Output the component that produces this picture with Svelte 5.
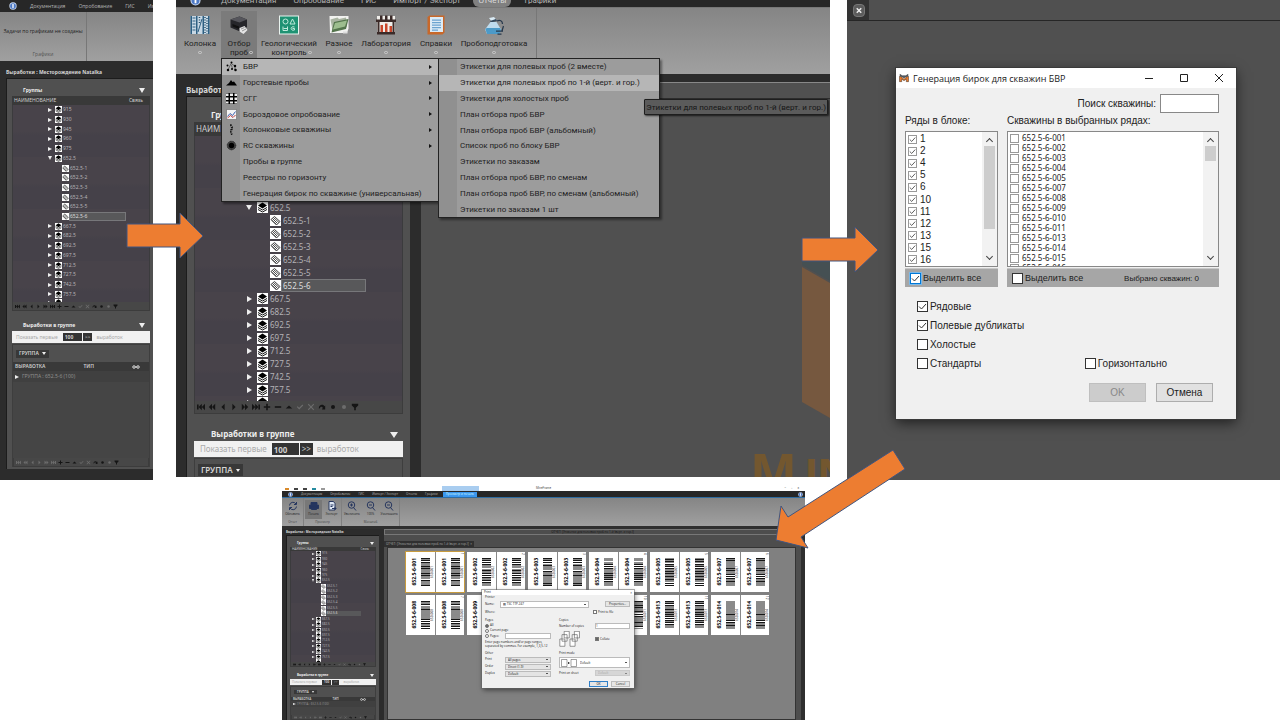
<script>
  const levels = ['915', '930', '945', '960', '975', '652.5', '652.5-1', '652.5-2', '652.5-3', '652.5-4', '652.5-5', '652.5-6', '667.5', '682.5', '692.5', '697.5', '712.5', '727.5', '742.5', '757.5'];
  const navGlyphs = ['first', 'rew', 'prev', 'next', 'fwd', 'last', 'plus', 'minus', 'up', 'ok', 'no', 'redo', 'dot', 'dot2', 'filter'];

  const tools = [
    { icon: 'column', label: 'Колонка' },
    { icon: 'printer', label: 'Отбор проб', active: true },
    { icon: 'geo', label: 'Геологический контроль' },
    { icon: 'folder', label: 'Разное' },
    { icon: 'lab', label: 'Лаборатория' },
    { icon: 'book', label: 'Справки' },
    { icon: 'flask', label: 'Пробоподготовка' }
  ];

  const menu = [
    { icon: 'nodes', label: 'БВР', sub: true, on: true },
    { icon: 'heap', label: 'Горстевые пробы', sub: true },
    { icon: 'grid', label: 'СГГ', sub: true },
    { icon: 'chart', label: 'Бороздовое опробование', sub: true },
    { icon: 'core', label: 'Колонковые скважины', sub: true },
    { icon: 'rc', label: 'RC скважины', sub: true },
    { label: 'Пробы в группе' },
    { label: 'Реестры по горизонту' },
    { label: 'Генерация бирок по скважине (универсальная)' }
  ];

  const submenu = [
    'Этикетки для полевых проб (2 вместе)',
    'Этикетки для полевых проб по 1-й (верт. и гор.)',
    'Этикетки для холостых проб',
    'План отбора проб БВР',
    'План отбора проб БВР (альбомный)',
    'Список проб по блоку БВР',
    'Этикетки по заказам',
    'План отбора проб БВР, по сменам',
    'План отбора проб БВР, по сменам (альбомный)',
    'Этикетки по заказам 1 шт'
  ];

  const rowNumbers = [1, 2, 4, 5, 6, 10, 11, 12, 13, 15, 16];
  const holes = ['001', '002', '003', '004', '005', '007', '008', '009', '010', '011', '013', '014', '015', '016'];
  const kinds = [['Рядовые', true], ['Полевые дубликаты', true], ['Холостые', false], ['Стандарты', false]];
  const cards = ['001', '002', '003', '004', '005', '007', '008', '009', '010', '011', '013', '014'];

  function bars(code) {
    const out = [];
    let seed = Number(code) * 7919 + 13;
    let y = 0;
    while (y < 56) {
      seed = (seed * 1103515245 + 12345) % 2147483648;
      const h = 1 + (seed >> 9) % 3;
      out.push([y, Math.min(h, 56 - y)]);
      y += h + 1 + (seed >> 14) % 2;
    }
    return out;
  }
</script>

{#snippet globe()}
  <svg class="globe" viewBox="0 0 12 12" aria-hidden="true">
    <circle cx="6" cy="6" r="5.5" fill="#c9d8f0" />
    <circle cx="6" cy="6" r="4.3" fill="#4c78c4" />
    <path d="M5 3h2v6H5z" fill="#fff" />
  </svg>
{/snippet}

{#snippet navBar(dim)}
  <div class="nav" class:dim>
    {#each navGlyphs as g}
      <svg viewBox="0 0 10 10" class={g} aria-hidden="true">
        {#if g === 'first'}<path d="M0 2h2v6H0zM6 1v8L2 5zM10 1v8L6 5z" />
        {:else if g === 'rew'}<path d="M5 1v8L1 5zM9 1v8L5 5z" />
        {:else if g === 'prev'}<path d="M7 1v8L3 5z" />
        {:else if g === 'next'}<path d="M3 1v8l4-4z" />
        {:else if g === 'fwd'}<path d="M1 1v8l4-4zM5 1v8l4-4z" />
        {:else if g === 'last'}<path d="M8 2h2v6H8zM0 1v8l4-4zM4 1v8l4-4z" />
        {:else if g === 'plus'}<path d="M4 1h2v3h3v2H6v3H4V6H1V4h3z" />
        {:else if g === 'minus'}<path d="M1 4h8v2H1z" />
        {:else if g === 'up'}<path d="M1 7l4-4 4 4z" />
        {:else if g === 'ok'}<path d="M1 5l1-1 2 2 4-4 1 1-5 5z" />
        {:else if g === 'no'}<path d="M2 1l3 3 3-3 1 1-3 3 3 3-1 1-3-3-3 3-1-1 3-3-3-3z" />
        {:else if g === 'redo'}<path d="M1 7c0-5 5-6 7-3l1-1v5H5l1-2C5 4 3 4 2 7z" />
        {:else if g === 'filter'}<path d="M1 1h8v2L6 6v3H4V6L1 3z" />
        {:else}<circle cx="5" cy="5" r="2.500" />{/if}
      </svg>
    {/each}
  </div>
{/snippet}

{#snippet layers()}
  <svg class="leaf" viewBox="0 0 22 22" aria-hidden="true">
    <path fill="#fff" d="M0 0h22v22H0z" />
    <path d="M11 1l9 6-9 6-9-6z" />
    <path d="M2 11l9 5 9-5M2 15l9 5 9-5" fill="none" stroke="#111" stroke-width="2" />
  </svg>
{/snippet}

{#snippet sidebar(size)}
  <section class="side {size}">
    <h2 class="side-title"><span>Выработки : Месторождение Natalka</span></h2>
    <div class="frame">
      <div class="cap"><b>Группы</b><i class="fold"></i></div>
      <div class="head"><span>НАИМЕНОВАНИЕ</span>{#if size !== 'lg'}<span>Связь</span>{/if}</div>
      <div class="tree">
        <ul>
          {#each levels.slice(size === 'lg' ? 5 : 0) as name}
            {@const child = name.includes('-')}
            <li class:child>
              {#if child}
                <svg class="leaf" viewBox="0 0 22 22" aria-hidden="true">
                  <path fill="#fff" d="M0 0h22v22H0z" />
                  <path stroke="#444" stroke-width="2" fill="none" d="M2 9l7-6 11 10-7 7zM5 7l10 10M7 5l11 10M3 10l10 9" />
                </svg>
              {:else}
                <i class="tri" class:open={name === '652.5'}></i>{@render layers()}
              {/if}
              <span class:picked={name === '652.5-6'}>{name}</span>
            </li>
          {/each}
        </ul>
        <div class="peek"><i class="tri"></i>{@render layers()}</div>
      </div>
      {@render navBar(false)}
      <div class="cap second"><b>Выработки в группе</b><i class="fold"></i></div>
      <div class="show">
        <label for="count-{size}">Показать первые</label>
        <input id="count-{size}" type="text" value="100" />
        <button type="button">&gt;&gt;</button>
        <span>выработок</span>
      </div>
      <div class="group">
        <div class="group-by"><button type="button">ГРУППА<i class="fold"></i></button></div>
        {#if size !== 'lg'}
          <div class="head"><span>ВЫРАБОТКА</span><span>ТИП</span><svg class="oo" viewBox="0 0 16 8" aria-hidden="true"><path d="M6 4h4" stroke="#ddd" stroke-width="2" /><circle cx="4" cy="4" r="2.500" /><circle cx="12" cy="4" r="2.500" /></svg></div>
          <div class="group-row"><i class="tri"></i><span>ГРУППА : 652.5-6 (100)</span></div>
          <div class="rest"></div>
          {@render navBar(true)}
        {/if}
      </div>
    </div>
  </section>
{/snippet}

{#snippet toolIcon(name)}
  <svg class="tool-icon" viewBox="0 0 40 40" aria-hidden="true">
    {#if name === 'column'}
      <path fill="#c8d8e4" d="M1 2h38v36H1z" />
      <path fill="#2d5f82" d="M1 2h3v36H1zM12 2h3v36h-3zM25 2h3v36h-3zM36 2h3v36h-3z" />
      <path stroke="#2d5f82" stroke-width="2" d="M5 6h6M5 12h6M5 18h6M5 24h6M5 30h6M16 34l8-26" />
      <path stroke="#28536f" stroke-width="3" stroke-dasharray="2 3" d="M30 4v33M34 6v31M19 4v15" />
    {:else if name === 'printer'}
      <path fill="#26262a" d="M3 9l18-6 15 6v15l-14 9L3 25z" />
      <path fill="#55555b" d="M3 9l18-6 15 6-15 6z" />
      <path fill="#111" d="M7 18l13 5v5L7 23z" />
      <path fill="#e6e6e6" d="M21 26l10-4 6 8-8 8-8-5z" />
      <path stroke="#777" stroke-width="1.500" d="M24 28l7-3M26 32l8-4" />
    {:else if name === 'geo'}
      <path fill="#e9f3ef" d="M0 1h40v38H0z" />
      <path fill="#1f9273" d="M2 3h36v34H2z" />
      <g fill="none" stroke="#c2eadc" stroke-width="2"><circle cx="13" cy="13" r="5" /><path d="M22 18l5-10 5 10zM8 23v8h9v-8M9 27h7M31 24c-9-3-9 9 0 6v-3h-4" /></g>
    {:else if name === 'folder'}
      <path fill="#f2f2f0" d="M1 2h38v25l-3 9H2z" />
      <path fill="#aab4a2" d="M3 9l14-4 3 3 14-3 2 18-29 8z" />
      <path fill="#54744c" d="M10 14l29-6-5 20-29 7z" />
      <path fill="#9dbd8e" d="M12 16l24-5-4 12-24 6z" />
      <path fill="#ddd" d="M28 33h9v4h-9z" />
    {:else if name === 'lab'}
      <path fill="#f0eeea" d="M2 2h36v36H2z" />
      <path fill="#3b2b29" d="M0 9h40v5H0zM2 34h36v5H2zM3 14h4v20H3zM33 14h4v20h-4zM8 1h5v8H8zM18 1h5v8h-5zM28 1h5v8h-5z" />
      <path fill="#c8462b" d="M9 20h5v14H9zM18 17h5v17h-5zM27 22h5v12h-5z" />
    {:else if name === 'book'}
      <path fill="#c8682a" d="M3 4l4-3h30v34l-4 4H3z" />
      <path fill="#dcebf6" d="M8 4h26v30H8z" />
      <path stroke="#6aa3cf" stroke-width="2.500" d="M12 10h18M12 15h18M12 20h18M12 25h18M12 30h12" />
    {:else}
      <path fill="#d9eaf4" d="M10 6l10-2 5 6-9 4z" />
      <path fill="#34485c" d="M12 12l12-4 2 4-12 3z" />
      <path fill="#bfdcee" d="M13 14h12l9 15-3 9H6l-4-9z" />
      <path fill="#4c9ac8" d="M5 26h27l2 4-3 8H6l-3-9z" />
      <path fill="none" stroke="#26384c" stroke-width="2.500" d="M26 12c6-3 11 0 11 6M39 22l-3 10M24 32h14M27 38h8" />
    {/if}
  </svg>
{/snippet}

{#snippet menuIcon(name)}
  <svg class="menu-icon" viewBox="0 0 22 22" aria-hidden="true">
    {#if name === 'nodes'}
      <circle cx="11" cy="3" r="2" /><circle cx="3" cy="9" r="2" /><circle cx="4" cy="18" r="2.500" /><circle cx="12" cy="16" r="2" /><circle cx="18" cy="10" r="2.500" /><circle cx="19" cy="18" r="2.500" />
      <path d="M4 18L10 5l8 5M13 16l-2-8M18 10v8" stroke="#111" fill="none" />
    {:else if name === 'heap'}<path d="M0 17l6-5 4-6 3 4 3-1 6 8z" />
    {:else if name === 'grid'}
      <path d="M0 0h22v22H0z" />
      <path fill="#eee" d="M0 1h5v5H0zM8 1h6v5H8zM17 1h5v5h-5zM0 9h5v5H0zM8 9h6v5H8zM17 9h5v5h-5zM0 17h5v4H0zM8 17h6v4H8zM17 17h5v4h-5z" />
    {:else if name === 'chart'}
      <path fill="#f4f4f4" stroke="#555" d="M1 1h20v20H1z" />
      <path d="M3 15l5-6 5 4 6-8" stroke="#3a5fae" stroke-width="2" fill="none" /><path d="M3 18l6-5 5 4 5-5" stroke="#bd4040" stroke-width="2" fill="none" />
    {:else if name === 'core'}<path d="M11 1c-3 3 3 4 0 7s3 4 0 6 3 4-1 7" stroke="#111" stroke-width="4" stroke-dasharray="3 2" fill="none" />
    {:else if name === 'rc'}<circle cx="11" cy="11" r="8.500" fill="#444" stroke="#222" stroke-width="2" stroke-dasharray="2 1" /><circle cx="11" cy="11" r="5.500" />{/if}
  </svg>
{/snippet}

<main class="slide">
  <div class="top">
    <section class="shot first-shot">
      <nav class="tabs small">{@render globe()}<a href="#doc">Документация</a><a href="#opr">Опробование</a><a href="#gis">ГИС</a><a href="#imp">Импорт</a></nav>
      <div class="ribbon mini">
        <div class="task"><span>Задачи по графикам не созданы</span><small>Графики</small></div>
      </div>
      {@render sidebar('md')}
    </section>

    <section class="shot second-shot">
      <nav class="tabs cut">{@render globe()}<a href="#doc2">Документация</a><a href="#opr2">Опробование</a><a href="#gis2">ГИС</a><a href="#imp2">Импорт / Экспорт</a><a class="current" href="#rep2">Отчеты</a><a href="#gr2">Графики</a></nav>
      <div class="ribbon">
        <div class="tools">
          {#each tools as t}
            <button type="button" class:active={t.active}>{@render toolIcon(t.icon)}<span>{t.label}</span><i class="drop"></i></button>
          {/each}
        </div>
      </div>
      <div class="work">
        {@render sidebar('lg')}
        <div class="canvas">
          <div class="canvas-tab"></div>
          <svg class="brand" viewBox="0 0 80 225" role="img" aria-label="MINE">
            <path fill="#455053" d="M52 0h28v29L52 13z" />
            <path fill="#76583f" d="M52 15l28 16v135l-28-16z" />
            <g fill="#73572f" font-family="Liberation Sans" font-weight="700"><text x="1" y="239" font-size="54">M</text><text x="55" y="239" font-size="46">INE</text></g>
          </svg>
        </div>
      </div>
      <div class="menu main-menu" role="menu">
        {#each menu as m}
          <button type="button" role="menuitem" class:on={m.on}>
            <span class="slot">{#if m.icon}{@render menuIcon(m.icon)}{/if}</span><span class="text">{m.label}</span>{#if m.sub}<i class="more"></i>{/if}
          </button>
        {/each}
      </div>
      <div class="menu sub-menu" role="menu">
        {#each submenu as m, i}
          <button type="button" role="menuitem" class:on={i === 1}><span class="slot"></span><span class="text">{m}</span></button>
        {/each}
      </div>
      <div class="tip" role="tooltip">Этикетки для полевых проб по 1-й (верт. и гор.)</div>
    </section>

    <section class="shot third-shot">
      <div class="tab-strip"><button type="button" aria-label="Закрыть"><svg viewBox="0 0 8 8"><path d="M1 1l6 6M7 1L1 7" stroke="#eee" stroke-width="2" /></svg></button></div>
      <div class="dialog" role="dialog" aria-label="Генерация бирок для скважин БВР">
        <header>
          <svg class="logo" viewBox="0 0 22 18" aria-hidden="true"><path fill="#ea7a2a" d="M1 17V5l5 2 5 5 5-5 5-2v12h-5v-6l-5 4-5-4v6z" /><path fill="#55606a" d="M2 1l5 3h8l5-3-1 4-4 1-4 3-4-3-4-1z" /></svg>
          <h1>Генерация бирок для скважин БВР</h1>
          <button type="button" aria-label="Свернуть"><svg viewBox="0 0 10 10"><path d="M1 5.500h8" /></svg></button>
          <button type="button" aria-label="Развернуть"><svg viewBox="0 0 10 10"><path d="M1.500 1.500h7v7h-7z" /></svg></button>
          <button type="button" aria-label="Закрыть окно"><svg viewBox="0 0 10 10"><path d="M1 1l8 8M9 1L1 9" /></svg></button>
        </header>
        <div class="body">
          <div class="search"><label for="find">Поиск скважины:</label><input id="find" type="text" /></div>
          <div class="lists">
            <div class="pick rows-pick">
              <h3>Ряды в блоке:</h3>
              <div class="box">
                <div class="items">{#each rowNumbers as n}<label><input type="checkbox" checked />{n}</label>{/each}</div>
                <div class="bar"><i class="chev up"></i><span class="thumb"></span><i class="chev"></i></div>
              </div>
              <div class="all"><label><input class="focus" type="checkbox" checked />Выделить все</label></div>
            </div>
            <div class="pick holes-pick">
              <h3>Скважины в выбранных рядах:</h3>
              <div class="box">
                <div class="items">{#each holes as h}<label><input type="checkbox" />652.5-6-{h}</label>{/each}</div>
                <div class="bar"><i class="chev up"></i><span class="thumb short"></span><i class="chev"></i></div>
              </div>
              <div class="all"><label><input type="checkbox" />Выделить все</label><span>Выбрано скважин: 0</span></div>
            </div>
          </div>
          <div class="options">
            <div class="kinds">{#each kinds as [k, on]}<label><input type="checkbox" checked={on} />{k}</label>{/each}</div>
            <label class="horizontal"><input type="checkbox" />Горизонтально</label>
          </div>
          <footer><button type="button" disabled>OK</button><button type="button">Отмена</button></footer>
        </div>
      </div>
    </section>
  </div>

  <div class="bottom">
    <section class="shot fourth-shot">
      <div class="win-title"><i class="q1"></i><i class="q2"></i><i class="q3"></i><i class="q4"></i><i class="q5"></i><span class="ctx"></span><span class="caption">MineFrame</span><span class="ctl">–</span><span>▫</span><span>×</span></div>
      <nav class="tabs tiny">{@render globe()}<a href="#d4">Документация</a><a href="#o4">Опробование</a><a href="#g4">ГИС</a><a href="#i4">Импорт / Экспорт</a><a href="#r4">Отчеты</a><a href="#gr4">Графики</a><a class="current" href="#p4">Просмотр и печать</a><span class="grow"></span>{@render globe()}</nav>
      <div class="ribbon low">
        <div class="set"><div class="btns"><button type="button"><svg viewBox="0 0 20 20"><path d="M3 9a7 7 0 0 1 13-3M17 11a7 7 0 0 1-13 3" /><path d="M17 2v5h-5M3 18v-5h5" /></svg>Обновить</button></div><small>Отчет</small></div>
        <div class="set"><div class="btns"><button type="button" class="active"><svg viewBox="0 0 20 20"><path fill="#24345e" d="M4 3h12v4H4zM1 8h18v7H1zM5 14h10v3H5z" /></svg>Печать</button><button type="button"><svg viewBox="0 0 20 20"><path fill="#dfe8f4" d="M4 1h9l3 4v13H4z" /><path d="M7 8h6M7 11h4M10 15h8M15 12l3 3-3 3" /></svg>Экспорт</button></div><small>Просмотр</small></div>
        <div class="set"><div class="btns">{#each ['Увеличить', '100%', 'Уменьшить'] as z, i}<button type="button"><svg viewBox="0 0 20 20"><circle cx="9" cy="8" r="6.500" /><path d="M13 13l5 6M6 8h6" />{#if i === 0}<path d="M9 5v6" />{/if}</svg>{z}</button>{/each}</div><small>Масштаб</small></div>
      </div>
      <div class="work">
        {@render sidebar('xs')}
        <div class="report">
          <div class="report-title">ОТЧЕТ: [Этикетки для полевых проб по 1-й (верт. и гор.)]</div>
          <div class="report-tabs"><span>ОТЧЕТ: [Этикетки для полевых проб по 1-й (верт. и гор.)]&nbsp; ×</span></div>
          <div class="sheet">
            {#each cards as c, i}
              <div class="card" class:chosen={i === 0}>
                {#each [0, 1] as half}
                  <div class="half">
                    <b>652.5-6-{c}</b>
                    <svg viewBox="0 0 20 56" preserveAspectRatio="none" aria-hidden="true">{#each bars(c) as [y, h]}<rect x="0" {y} width="20" height={h} fill="#161616" />{/each}</svg>
                    <span class="code">6526{c}</span>
                    {#if half}<span class="num">{i + 1}</span>{/if}
                  </div>
                {/each}
              </div>
            {/each}
          </div>
        </div>
      </div>

      <form class="print" aria-label="Print">
        <div class="print-head"><span>Print</span><button type="button" aria-label="Close">×</button></div>
        <div class="print-body">
          <fieldset class="printer">
            <legend>Printer</legend>
            <label for="pr-name">Name:</label><select id="pr-name"><option>▤ TSC TTP-247</option></select><button type="button">Properties...</button>
            <span>Where:</span><span></span><label><input type="checkbox" />Print to file</label>
          </fieldset>
          <div class="cols">
            <fieldset class="pages">
              <legend>Pages</legend>
              <label><input type="radio" name="pg" checked />All</label>
              <label><input type="radio" name="pg" />Current page</label>
              <div class="range"><label><input type="radio" name="pg" />Pages:</label><input type="text" aria-label="Page range" /></div>
              <p>Enter page numbers and/or page ranges,<br />separated by commas. For example, 1,3,5-12</p>
            </fieldset>
            <fieldset class="copies">
              <legend>Copies</legend>
              <div class="number"><label for="pr-num">Number of copies</label><input id="pr-num" type="text" value="1" /></div>
              <div class="collate">
                <svg viewBox="0 0 60 44" aria-hidden="true"><path fill="#fff" stroke="#444" stroke-width="1.500" d="M14 1h14v18H14zM8 10h14v18H8zM2 22h14v20H2zM42 1h14v18H42zM36 10h14v18H36zM30 22h14v20H30z" /></svg>
                <label><input type="checkbox" checked />Collate</label>
              </div>
            </fieldset>
            <fieldset class="other">
              <legend>Other</legend>
              <label for="pr-p">Print</label><select id="pr-p"><option>All pages</option></select>
              <label for="pr-o">Order</label><select id="pr-o"><option>Direct (1-9)</option></select>
              <label for="pr-d">Duplex</label><select id="pr-d"><option>Default</option></select>
            </fieldset>
            <fieldset class="mode">
              <legend>Print mode</legend>
              <div class="mode-pick">
                <svg viewBox="0 0 34 16" aria-hidden="true"><path fill="#fff" stroke="#444" d="M1 1h11v14H1zM20 1h11v14H20z" /><path d="M14 6l4 2-4 2z" /></svg>
                <select aria-label="Print mode"><option>Default</option></select>
              </div>
              <label for="pr-s">Print on sheet</label><select id="pr-s" disabled><option>Default</option></select>
            </fieldset>
          </div>
          <footer><button type="button" class="ok">OK</button><button type="button">Cancel</button></footer>
        </div>
      </form>
    </section>
  </div>

  <svg class="arrows" viewBox="0 0 1280 720" aria-hidden="true">
    <g fill="#ed7d31" stroke="#41557f" stroke-width="1">
      <path d="M127 224h53v-11l23 23-23 22v-11h-53z" />
      <path d="M802 238h53v-11l23 23-23 22v-11h-53z" />
      <path d="M893 450l12 19-104 68 7 11-32-8 5-34 7 11z" />
    </g>
  </svg>
</main>

<style>
  :global(body) { margin: 0; background: #fff; }
  .slide, .slide * { box-sizing: border-box; }
  .slide { position: relative; overflow: hidden; font-family: Roboto, "Noto Sans", sans-serif; font-size: 8px; line-height: 1; color: #222; }
  .slide :is(button, input, select) { font: inherit; color: inherit; margin: 0; padding: 0; border: 0; border-radius: 0; background: none; }
  .slide :is(h1, h2, h3, ul, p, fieldset) { margin: 0; padding: 0; border: 0; list-style: none; font: inherit; min-width: 0; }
  .slide i { font-style: normal; }
  .slide svg { display: block; flex: none; }
  .top { display: grid; grid-template-columns: minmax(0, 153fr) minmax(0, 23fr) minmax(0, 654fr) minmax(0, 17fr) minmax(0, 433fr); align-items: start; }
  .second-shot { grid-column: 3; }
  .third-shot { grid-column: 5; }
  .bottom { display: grid; grid-template-columns: minmax(0, 282fr) minmax(0, 523fr) minmax(0, 475fr); padding-top: 6px; }
  .shot { position: relative; overflow: hidden; display: flex; flex-direction: column; white-space: nowrap; background: #2c2c2c; }
  .first-shot, .third-shot { height: 480px; }
  .second-shot { height: 477px; }
  .fourth-shot { grid-column: 2; height: 234px; background: #2f2f2f; }
  .arrows { position: absolute; inset: 0; width: 100%; pointer-events: none; }

  .tabs { display: flex; align-items: center; background: #272727; flex: none; }
  .tabs a { color: #b4b4b4; text-decoration: none; }
  .tabs.small { height: 12px; padding-left: 9px; gap: 13px; font-size: 5px; font-family: "Open Sans", sans-serif; }
  .globe { width: 8px; height: 8px; }
  .tabs.cut { height: 8px; padding: 0 0 6px 14px; gap: 17px; font-size: 8px; border-bottom: 1px solid #777; }
  .cut .globe { width: 11px; height: 11px; margin-right: 3px; }
  .cut .current { background: #808080; color: #ddd; border-radius: 6px; padding: 2px 5px; margin: 0 -4px; }
  .tabs.tiny { height: 7px; padding: 0 2px 0 6px; gap: 8px; font-size: 3px; font-family: "Open Sans", sans-serif; border-bottom: 1px solid #2f6ca0; }
  .tiny .globe { width: 5px; height: 5px; }
  .tiny .current { background: #3b97ef; color: #dff; padding: 1px 3px; margin-left: -3px; }
  .grow { flex: 1; }

  .ribbon { flex: none; height: 66px; background: linear-gradient(#858585, #a0a0a0); display: flex; }
  .ribbon.mini { height: 49px; }
  .task { width: 87px; border-right: 1px solid #777; display: flex; flex-direction: column; align-items: center; font-size: 5px; font-family: "Open Sans", sans-serif; padding-top: 17px; }
  .task small { font-size: 5px; color: #555; margin-top: 18px; }
  .tools { display: grid; grid-template-columns: 42px 36px 64px 36px 58px 42px 74px; padding: 3px 5px 3px 3px; border-right: 1px solid #777; height: 66px; }
  .tools button { position: relative; display: flex; flex-direction: column; align-items: center; padding-top: 4px; line-height: 9px; font-size: 8px; }
  .tools button.active { background: #7b7b7b; }
  .tools .tool-icon { width: 20px; height: 20px; margin-bottom: 4px; }
  .tools span { max-width: 100%; white-space: normal; }
  .tools button.active span { max-width: 32px; }
  .drop { width: 4px; height: 3px; border: 1px solid #ccc; border-radius: 2px; margin-top: 3px; }
  .tools button:is(:nth-child(2), :nth-child(3)) .drop { position: absolute; right: 4px; top: 37px; }
  .tools button:nth-child(3) .drop { right: 9px; }

  .side { display: flex; flex-direction: column; flex: none; color: #d5d5d5; font-size: var(--fs); font-family: "Noto Sans", sans-serif; background: #2c2c2c; }
  .side.md { --fs: 5px; --title: 13px; --cap: 17px; --head: 9px; --tree: 197px; --in: 194px; --nav: 9px; --cap2: 20px; --show: 12px; --gb: 17px; --pad: 34px; --cpad: 49px; --tri: 2px; --triw: 6px; --tgap: 2px; --leaf: 7px; --lgap: 1px; --pick: 57px; --fp: 5px; --capl: 11px; --nw: 5px; --ng: 2px; --num: 19px; padding: 5px 0 11px 6px; flex: 1; min-height: 0; }
  .side.lg { --fs: 8px; --title: 15px; --cap: 25px; --head: 14px; --tree: 265px; --in: 261px; --nav: 13px; --cap2: 27px; --show: 16px; --gb: 22px; --pad: 50px; --cpad: 75px; --tri: 3px; --triw: 8px; --tgap: 4px; --leaf: 11px; --lgap: 2px; --pick: 85px; --fp: 7px; --capl: 17px; --nw: 8px; --ng: 3px; --num: 27px; padding-left: 10px; width: 245px; }
  .side.xs { --fs: 3px; --title: 7px; --cap: 11px; --head: 4px; --tree: 111px; --in: 109px; --nav: 5px; --cap2: 12px; --show: 6px; --gb: 10px; --pad: 20px; --cpad: 30px; --tri: 1px; --triw: 4px; --tgap: 1px; --leaf: 5px; --lgap: 1px; --pick: 35px; --fp: 3px; --capl: 7px; --nw: 3px; --ng: 2px; --num: 9px; padding-left: 4px; width: 102px; }
  .side-title { flex: none; height: var(--title); display: flex; align-items: center; }
  .side h2.side-title { font-weight: 700; }
  .frame { background: #505050; padding: 0 var(--fp); display: flex; flex-direction: column; flex: 1; min-height: 0; border: solid #1c1c1c; border-width: 0 0 0 1px; box-shadow: 0 -1px #1c1c1c; }
  .lg .frame { margin-right: 11px; }
  .xs .frame { margin-right: 5px; }
  .md .frame { padding-right: 3px; padding-bottom: 2px; }
  .cap { flex: none; height: var(--cap); display: flex; align-items: end; justify-content: space-between; padding: 0 5px 3px var(--capl); color: #eee; }
  .xs .cap { padding: 0 2px 2px 7px; }
  .cap.second { height: var(--cap2); }
  .fold { border: solid transparent; border-width: calc(var(--tri) + 3px) calc(var(--tri) + 1px) 0; border-top-color: #eee; }
  .xs .fold { border-width: 3px 2px 0; }
  .head { flex: none; height: var(--head); background: #393939; display: flex; align-items: center; justify-content: space-between; color: #ccc; padding: 0 7px 0 2px; }
  .tree { flex: none; height: var(--tree); overflow: hidden; color: #b4b2b6; background: repeating-linear-gradient(#48434a 0 26px, #454149 30px 52px); border: solid #3b3b3d; border-width: 0 1px; }
  .tree ul { height: var(--in); display: flex; flex-direction: column; }
  .lg .tree ul { padding-top: 65px; }
  .tree li, .peek { flex: 1; display: flex; align-items: center; padding-left: var(--pad); min-height: 0; }
  .tree li.child { padding-left: var(--cpad); }
  .tree li span { padding-left: var(--lgap); height: 100%; display: flex; align-items: center; }
  .tree .picked { width: var(--pick); background: #58585a; box-shadow: inset 0 0 0 1px #77777a; color: #ddd; }
  .xs .tree .picked { box-shadow: none; }
  .tri { width: var(--triw); margin-right: var(--tgap); display: flex; justify-content: center; }
  .tri::before { content: ""; border: solid transparent; border-width: var(--tri) 0 var(--tri) calc(var(--tri) + 2px); border-left-color: #eee; }
  .tri.open::before { border-width: calc(var(--tri) + 2px) var(--tri) 0; border-color: #eee transparent; }
  .leaf { width: var(--leaf); height: var(--leaf); }
  .nav { flex: none; height: var(--nav); background: #474747; display: flex; align-items: center; gap: var(--ng); padding: 0 2px; border: 1px solid #3c3c3c; border-top: 0; }
  .nav svg { width: var(--nw); height: var(--nw); fill: #151515; }
  .nav svg:is(.ok, .no, .dot2), .nav.dim svg:nth-child(-n + 6) { fill: #6c6c6c; }
  .show { flex: none; height: var(--show); background: #f1f1f1; display: flex; align-items: center; color: #aaa; padding-left: 4px; margin-bottom: 1px; }
  .lg .show { padding-left: 6px; }
  .xs .show { padding-left: 2px; }
  .side .show input { width: var(--num); height: calc(var(--show) - 4px); background: #333; color: #ccc; font-weight: 700; padding-left: 2px; margin-left: 5px; }
  .xs .show input { height: 5px; }
  .side .show button { background: #333; color: #ccc; height: calc(var(--show) - 4px); padding: 0 2px; margin: 0 4px 0 1px; }
  .xs .show button { height: 5px; }
  .group { flex: 1; min-height: 0; display: flex; flex-direction: column; border: 1px solid #3e3e3e; border-bottom: 0; background: #454545; }
  .lg .group { background: #505050; }
  .group-by { flex: none; height: var(--gb); background: #505050; display: flex; align-items: center; padding-left: 3px; }
  .side .group-by button { background: #383838; display: flex; align-items: center; gap: 3px; padding: 0 3px; height: calc(var(--nav) - 1px); font-weight: 600; }
  .group-by .fold { border-width: 3px 2px 0; }
  .xs .group-by .fold { border-width: 2px 1px 0; }
  .group .head { font-weight: 600; padding-right: 9px; }
  .oo { width: 8px; height: 4px; fill: none; stroke: #ddd; stroke-width: 2; }
  .xs .oo { width: 6px; height: 3px; }
  .group-row { flex: none; height: calc(var(--head) + 2px); display: flex; align-items: center; background: #404040; color: #8f8f8f; padding-left: 1px; }
  .rest { flex: 1; }
  .work { display: flex; flex: 1; min-height: 0; }
  .second-shot .work { padding-top: 8px; }
  .canvas { flex: 1; background: #505050; border-top: 1px solid #888; display: flex; flex-direction: column; align-items: end; min-width: 0; }
  .canvas-tab { align-self: stretch; height: 16px; border-bottom: 1px solid #2e2e2e; }
  .brand { width: 80px; height: 225px; margin-top: auto; }

  .menu { position: absolute; background: #9c9c9c; border: 1px solid #222; display: grid; grid-auto-rows: 1fr; box-shadow: 2px 2px 2px #0006; }
  .main-menu { left: 45px; top: 58px; width: 218px; height: 144px; }
  .sub-menu { left: 262px; top: 58px; width: 222px; height: 160px; }
  .menu button { display: flex; align-items: center; text-align: left; font-size: 8px; }
  .menu button.on { background: #b6b6b6; }
  .slot { width: 18px; align-self: stretch; display: grid; place-items: center; background: #909090; margin-right: 3px; }
  .on .slot { background: none; }
  .menu-icon { width: 11px; height: 11px; }
  .text { flex: 1; padding-top: 1px; }
  .more { border: solid transparent; border-width: 2px 0 2px 3px; border-left-color: #111; margin-right: 6px; }
  .tip { position: absolute; right: 2px; top: 99px; height: 16px; line-height: 15px; padding: 0 1px; background: #5b5b5b; border: 1px solid #1e1e1e; color: #161616; border-radius: 1px; box-shadow: 1px 1px 2px #000a; font-size: 8px; }

  .third-shot { background: #505050; }
  .tab-strip { height: 21px; flex: none; border-bottom: 1px solid #262626; display: flex; }
  .tab-strip button { width: 22px; background: #333; display: grid; place-items: center end; padding-right: 4px; }
  .tab-strip svg { width: 12px; height: 13px; background: #5c5c5c; border: 1px solid #777; border-radius: 4px; padding: 2px; }
  .dialog { margin: 47px 44px 0 49px; background: #f0f0f0; box-shadow: 0 0 0 1px #3a3a3a, 0 4px 12px #0009; font-family: "Liberation Sans", Arial, sans-serif; font-size: 10px; color: #222; }
  .dialog header { height: 20px; background: #fff; display: flex; align-items: center; padding-left: 3px; }
  .logo { width: 12px; height: 11px; margin-right: 4px; }
  .dialog h1 { flex: 1; font-family: "Open Sans", sans-serif; font-size: 9px; }
  .dialog header button { width: 35px; display: grid; place-items: center; }
  .dialog header svg { width: 10px; height: 10px; fill: none; stroke: #222; }
  .body { padding: 6px 17px 17px 9px; }
  .search { display: flex; justify-content: flex-end; align-items: center; gap: 4px; }
  .dialog .search input { width: 59px; height: 19px; background: #fff; border: 1px solid #888; }
  .lists { display: grid; grid-template-columns: 93fr 212fr; column-gap: 9px; }
  .dialog h3 { height: 18px; line-height: 15px; }
  .box { height: 136px; border: 1px solid #888; background: #fff; display: flex; }
  .items { flex: 1; overflow: hidden; display: flex; flex-direction: column; padding: 1px 0 0 2px; }
  .items label { display: flex; align-items: center; gap: 3px; flex: 1; min-height: 0; }
  .holes-pick .items label { flex: none; height: 10px; font-family: "Noto Sans", sans-serif; font-size: 8px; }
  .dialog input[type="checkbox"] { appearance: none; width: 11px; height: 11px; flex: none; border: 1px solid #333; background: #fff; }
  .dialog .items input[type="checkbox"] { width: 9px; height: 9px; border-color: #999; }
  .dialog input[type="checkbox"]:checked { background: #fff url("data:image/svg+xml,%3Csvg xmlns='http://www.w3.org/2000/svg' viewBox='0 0 9 9'%3E%3Cpath d='M1 4.500l2.500 2.500L8 2' fill='none' stroke='%23333'/%3E%3C/svg%3E") center / 100%; }
  .dialog input.focus[type="checkbox"] { border-color: #0078d7; outline: 1px solid #7ab8e8; }
  .bar { width: 15px; background: #f2f2f2; display: flex; flex-direction: column; align-items: center; padding: 5px 1px; justify-content: space-between; }
  .chev { width: 5px; height: 5px; flex: none; border: solid #444; border-width: 0 1px 1px 0; transform: rotate(45deg); margin-bottom: 2px; }
  .chev.up { transform: rotate(225deg); margin: 2px 0 0; }
  .thumb { width: 11px; height: 83px; background: #cdcdcd; margin: 2px 0 auto; }
  .thumb.short { height: 15px; }
  .all { margin-top: 1px; height: 19px; background: #a6a6a6; border-top: 1px solid #c8c8c8; display: flex; align-items: center; justify-content: space-between; padding: 0 20px 0 5px; font-size: 9px; }
  .all span { font-size: 8px; padding-top: 2px; }
  .all label, .kinds label, .horizontal { display: flex; align-items: center; gap: 2px; }
  .all label { flex: none; }
  .rows-pick .all { padding-right: 0; }
  .options { display: flex; justify-content: space-between; align-items: flex-end; padding: 14px 52px 0 12px; }
  .kinds { display: grid; grid-auto-rows: 11px; row-gap: 8px; }
  .horizontal { height: 11px; }
  .dialog footer { display: flex; justify-content: flex-end; gap: 10px; padding: 14px 6px 0 0; }
  .dialog footer button { width: 57px; height: 19px; background: #e1e1e1; border: 1px solid #adadad; }
  .dialog footer button:disabled { background: #ccc; border-color: #bfbfbf; color: #888; }

  .win-title { height: 5px; flex: none; background: #fff; display: flex; align-items: center; font-size: 3px; gap: 5px; color: #555; padding: 0 6px 0 3px; }
  .win-title i { width: 4px; height: 2px; background: #444; }
  .win-title .q1 { background: #d98a2c; }
  .win-title .q4 { background: #258ba0; }
  .win-title .q5 { background: #999; }
  .ctx { width: 37px; height: 5px; background: #a9cdf0; margin-left: 112px; }
  .caption { margin-left: 52px; }
  .ctl { margin-left: auto; }
  .ribbon.low { height: 28px; }
  .set { width: 22px; border-right: 1px solid #808080; display: flex; flex-direction: column; align-items: center; justify-content: space-between; padding: 2px 1px; font-size: 3px; font-family: "Open Sans", sans-serif; color: #222; }
  .set:nth-child(2) { width: 38px; }
  .set:nth-child(3) { width: 58px; }
  .set small { font-size: 3px; color: #444; }
  .btns { display: flex; gap: 1px; align-self: stretch; }
  .set button { display: flex; flex-direction: column; align-items: center; gap: 2px; padding: 1px 0 3px; flex: 1 1 0; min-width: 0; }
  .set button.active { background: #787878; }
  .set svg { width: 10px; height: 10px; fill: none; stroke: #26365f; stroke-width: 2; }
  .fourth-shot .work { padding-top: 3px; }
  .report { flex: 1; min-width: 0; background: #4d4d4d; display: flex; flex-direction: column; margin-right: 4px; font-family: "Open Sans", sans-serif; }
  .report-title { height: 6px; line-height: 4px; border: 1px solid #777; text-align: center; font-size: 3px; color: #111; flex: none; }
  .report-tabs { height: 12px; flex: none; display: flex; align-items: flex-end; }
  .report-tabs span { font-size: 3px; height: 6px; line-height: 6px; background: #303030; color: #aaa; padding: 0 2px; }
  .sheet { flex: 1; background: #808080; margin: 0 5px 0 3px; border: 1px solid #333; padding: 4px 0 0 18px; display: grid; grid-template-columns: repeat(6, 58px); grid-auto-rows: 40px; gap: 3px; align-content: start; }
  .card { background: #fff; display: grid; grid-template-columns: 1fr 1fr; }
  .card.chosen { box-shadow: 0 0 0 1px #c79b3e; }
  .half { position: relative; display: flex; align-items: center; gap: 3px; padding-left: 5px; }
  .half + .half { border-left: 1px solid #888; }
  .half b { writing-mode: vertical-rl; transform: rotate(180deg); font-size: 5px; line-height: 7px; color: #000; }
  .half svg { width: 9px; height: 28px; }
  .code { writing-mode: vertical-rl; transform: rotate(180deg); font-size: 3px; line-height: 3px; margin-left: -2px; }
  .num { position: absolute; right: 1px; top: 1px; font-size: 3px; writing-mode: vertical-rl; }

  .print { position: absolute; left: 200px; top: 104px; width: 152px; height: 98px; background: #f0f0f0; color: #111; box-shadow: 0 0 0 1px #6668, 1px 2px 5px #0008; font-size: 3px; font-family: "Open Sans", sans-serif; display: flex; flex-direction: column; }
  .print-head { height: 5px; background: #fff; display: flex; justify-content: space-between; align-items: center; padding: 0 2px; }
  .print-body { flex: 1; padding: 0 4px 1px 3px; display: flex; flex-direction: column; }
  .print legend { padding: 0; height: 5px; line-height: 5px; }
  .printer { display: grid; grid-template-columns: 15px 89px 1fr; grid-auto-rows: 8px; align-items: center; }
  .printer button { justify-self: end; width: 25px; }
  .printer > label:last-child { margin-left: 4px; }
  .print label { display: flex; align-items: center; gap: 1px; }
  .print select, .print input[type="text"], .print button { height: 6px; line-height: 4px; border: 1px solid #bbb; background: #fff; min-width: 0; }
  .print select { appearance: none; padding: 0 2px; background: #e4e4e4 linear-gradient(#555, #555) right 2px center / 2px 1px no-repeat; }
  .print #pr-name { background-color: #fff; height: 7px; }
  .print select:disabled { background-color: #ccc; color: #888; }
  .print button { background: #e6e6e6; }
  .print .print-head button { border: 0; background: none; }
  .print input:is([type="checkbox"], [type="radio"]) { appearance: none; width: 4px; height: 4px; border: 1px solid #777; background: #fff; }
  .print input[type="radio"] { border-radius: 50%; }
  .print input:checked { background: #666; }
  .cols { display: grid; grid-template-columns: 66px 1fr; column-gap: 8px; grid-template-rows: 33px 27px; padding-top: 2px; flex: 1; }
  .pages label { height: 5px; }
  .range { display: flex; align-items: center; justify-content: space-between; margin-bottom: 1px; }
  .range input[type="text"] { width: 46px; }
  .pages p { line-height: 4px; }
  .number { display: flex; justify-content: space-between; }
  .number input { width: 35px; }
  .collate { display: flex; align-items: center; gap: 14px; padding-top: 2px; }
  .collate svg { width: 22px; height: 16px; }
  .other { display: grid; grid-template-columns: 20px 1fr; grid-auto-rows: 7px; align-items: center; align-content: start; }
  .mode { display: grid; grid-template-columns: 1fr 35px; grid-template-rows: 13px 8px; align-items: center; align-content: start; }
  .mode-pick { grid-column: 1 / -1; height: 11px; background: #fff; border: 1px solid #bbb; display: flex; align-items: center; padding-left: 1px; }
  .mode-pick svg { width: 17px; height: 8px; }
  .print .mode-pick select { flex: 1; border: 0; background-color: #fff; }
  .print footer { display: flex; justify-content: flex-end; gap: 3px; }
  .print footer button { width: 19px; }
  .print footer .ok { border-color: #2f7fc8; }
</style>
